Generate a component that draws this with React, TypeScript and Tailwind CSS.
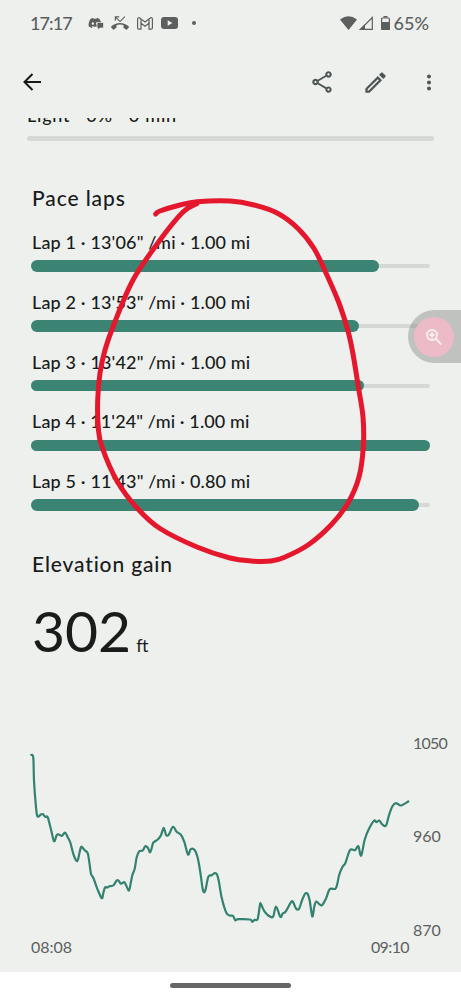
import React from 'react';
import { FaDiscord } from 'react-icons/fa';
import { MdMoreVert, MdOutlineEdit, MdOutlineShare, MdPhoneMissed } from 'react-icons/md';

type Point = [number, number];

const laps = [
  { name: 'Lap 1', pace: `13'06"`, distance: '1.00 mi', width: 348, spacing: 'tracking-[0.15px]' },
  { name: 'Lap 2', pace: `13'53"`, distance: '1.00 mi', width: 328, spacing: 'tracking-[0.15px]' },
  { name: 'Lap 3', pace: `13'42"`, distance: '1.00 mi', width: 332.5, spacing: 'tracking-[0.15px]' },
  { name: 'Lap 4', pace: `11'24"`, distance: '1.00 mi', width: 399, spacing: 'tracking-[0.12px]' },
  { name: 'Lap 5', pace: `11'43"`, distance: '0.80 mi', width: 388, spacing: 'tracking-[0.15px]' },
];

const elevation: Point[] = [
  [31.3, 754.3], [33.3, 757.3], [34, 780], [35.7, 803.3], [37, 814.7], [38.7, 816], [40.7, 814], [43, 813.7],
  [45.3, 816.3], [47.7, 816.7], [51, 829], [54, 840.7], [56.7, 834.7], [59, 834], [62, 835.3], [65, 832],
  [67.7, 836.7], [70.3, 842], [73.3, 853.3], [76.3, 860], [78, 859], [80.7, 847.3], [82.3, 847], [84.7, 849.7],
  [87.7, 852.7], [89.3, 861.7], [91, 873.3], [93.3, 877.3], [97.3, 888.3], [101.7, 897.7], [103.3, 892.7], [105, 887],
  [107.7, 887], [109.3, 885.7], [113.3, 885], [116.7, 880], [118.7, 880.3], [121, 883.3], [124.3, 881.7], [126.3, 885.3],
  [129, 890], [130.7, 882.7], [132.3, 874.7], [134.7, 868.3], [136.7, 856.7], [139.3, 850.7], [142.7, 850], [145.3, 845.7],
  [147.7, 847], [150.3, 851.7], [153, 842.7], [154.3, 841.3], [158, 838.7], [161, 834.7], [163.7, 827.3], [166, 834.3],
  [168.7, 834.3], [173, 826.3], [176.7, 831.3], [180.7, 834], [184.3, 841.3], [188, 854], [190.7, 848.7], [194.7, 849.7],
  [197.7, 857.3], [200.3, 871.7], [203, 890], [205.3, 890], [208.3, 876.3], [211.7, 874.7], [214.7, 872.7], [217, 874],
  [219, 881.7], [221.7, 897.3], [226.3, 912.3], [229.7, 915], [233, 915.3], [235.3, 919.7], [238.3, 918.7], [250, 919],
  [252.3, 921.3], [254.7, 919.3], [257.7, 918.3], [260, 904], [261, 903.7], [264.3, 910.7], [268.3, 915], [273, 916.3],
  [276, 906], [280.3, 916.3], [282.7, 913], [285.7, 911], [291.3, 901.3], [293.3, 902], [296, 908], [299, 908.3],
  [302.3, 899], [305.3, 893], [307.7, 893.7], [309.7, 900], [312.3, 916], [314.3, 906], [316.3, 901], [319.3, 903.7],
  [322, 904.7], [326, 898], [329.7, 888.7], [335.3, 888.3], [337.3, 883.3], [339.3, 874], [342.7, 866], [345.3, 862.7],
  [350, 849.7], [355, 849.7], [358.3, 845.7], [360.3, 854], [361.7, 853.7], [364.7, 839.3], [368.3, 829.7], [374, 820.3],
  [376.3, 821.7], [379.3, 820], [382, 823.7], [386, 825], [389, 814.7], [392.3, 806], [396, 802.7], [401, 805], [408.3, 801],
];

const marker: Point[] = [
  [155.7, 214], [160, 211], [180, 205], [197, 201.7], [230, 201], [254, 205], [278, 213.5], [298, 228.5], [314, 248.5],
  [326, 273], [339, 303], [348, 331], [353, 354], [358.3, 386.7], [363, 417], [363.3, 447], [359, 477], [348, 503],
  [331, 525], [308, 545], [284, 557.5], [271, 561], [251, 561], [230, 558], [197, 547], [160, 528.5], [137, 508],
  [117, 481], [102, 447], [98.3, 428], [97.7, 400], [100, 373], [105, 350], [113.3, 326], [133, 280], [160, 240],
  [183, 212], [197, 203.5],
];

// Catmull-Rom curve through every point
function smooth(points: Point[], tension = 6) {
  let d = `M${points[0][0]} ${points[0][1]}`;
  for (let i = 0; i < points.length - 1; i++) {
    const a = points[i - 1] ?? points[i];
    const b = points[i];
    const c = points[i + 1];
    const e = points[i + 2] ?? c;
    d += ` C${b[0] + (c[0] - a[0]) / tension} ${b[1] + (c[1] - a[1]) / tension} ${c[0] - (e[0] - b[0]) / tension} ${c[1] - (e[1] - b[1]) / tension} ${c[0]} ${c[1]}`;
  }
  return d;
}

function StatusBar() {
  return (
    <div className="flex h-[46px] items-center pl-[30px] pr-[32px] text-[#5c5f5e]">
      <span className="w-[58px] text-[18px] font-medium leading-none tracking-[-0.9px]">17:17</span>

      <div className="relative h-[14px] w-[16px]">
        <FaDiscord className="h-[14px] w-[14px]" />
        <svg className="absolute left-[8px] top-[6px]" width="8" height="8" viewBox="0 0 8 8">
          <path d="M1 .5h6.5v5.5H4L2 8V6H1z" fill="#5c5f5e" stroke="#eef0ee" strokeWidth=".7" />
        </svg>
      </div>
      <MdPhoneMissed className="ml-[7px] h-[18px] w-[18px]" />
      <svg className="ml-[8px]" width="16" height="13" viewBox="0 0 16 13" fill="none" stroke="currentColor" strokeWidth="1.2">
        <path d="M.6 2v9q0 1.200 1.100 1.200H4V6.300l4 3 4-3v5.900h2.300q1.100 0 1.100-1.200V2Q15.300.4 13.600.7L8 5 2.400.7Q.7.4.6 2Z" />
        <path d="M4 6.300V2M12 6.300V2" />
      </svg>
      <svg className="ml-[8px]" width="17" height="12" viewBox="0 0 17 12">
        <rect width="17" height="12" rx="3" fill="currentColor" />
        <path d="M6.700 3.300v5.400L11.400 6z" fill="#eef0ee" />
      </svg>
      <div className="ml-[14px] h-[4px] w-[4px] rounded-full bg-current"></div>

      <div className="ml-auto flex items-center">
        <svg width="17" height="14" viewBox="0 0 17 14">
          <path d="M0 3.500Q8.500-3 17 3.500L8.500 14z" fill="currentColor" />
        </svg>
        <svg className="ml-[2px]" width="14" height="14" viewBox="0 0 14 14">
          <path d="M13.300 1.500v11.800H1.500z" fill="none" stroke="currentColor" strokeWidth="1.200" />
          <path d="M0 14 6 8v6z" fill="currentColor" />
        </svg>
        <svg className="ml-[8px]" width="9" height="14" viewBox="0 0 9 14">
          <path d="M2.500 0h4v1.500h-4z" fill="currentColor" />
          <rect x=".6" y="2" width="7.800" height="11.400" rx="1" fill="none" stroke="currentColor" strokeWidth="1.200" />
          <path d="M0 6h9v7q0 1-1 1H1q-1 0-1-1z" fill="currentColor" />
        </svg>
        <span className="ml-[4px] text-[18px] font-medium leading-none">65%</span>
      </div>
    </div>
  );
}

function Toolbar() {
  return (
    <div className="flex h-[72px] items-center pl-[23px] pr-[20px] text-[#4d5755]">
      <svg width="18" height="18" viewBox="0 0 18 18" fill="none" stroke="#151918" strokeWidth="2">
        <path d="M18 9H1.500M9.500 1 1.500 9l8 8" />
      </svg>
      <MdOutlineShare className="ml-auto h-[26px] w-[26px]" />
      <MdOutlineEdit className="ml-[27px] h-[27px] w-[27px]" />
      <MdMoreVert className="ml-[28px] h-[27px] w-[24px]" />
    </div>
  );
}

export default function App() {
  return (
    <div className="relative flex h-[999px] w-[461px] flex-col overflow-hidden bg-white font-['Lato','Open_Sans',sans-serif] text-[#191c1b]">
      <div className="flex h-[972px] flex-col bg-[#eef0ee]">
        <StatusBar />
        <Toolbar />

        {/* Heart zone row, scrolled under the toolbar */}
        <div className="h-[24px] shrink-0 overflow-hidden pl-[27px] pr-[27px]">
          <div className="-mt-[15px] h-[33px] whitespace-nowrap text-[18px] font-medium leading-[24px] tracking-[0.75px]">Light · 0% · 0 min</div>
          <div className="h-[5px] rounded-full bg-[#d5d8d5]"></div>
        </div>

        {/* Pace laps */}
        <section className="mt-[42px] pl-[31px] pr-[31px]">
          <h2 className="h-[28px] pl-px text-[21px] font-medium leading-[28px] tracking-[0.9px]">Pace laps</h2>
          <div className="mt-[18px]">
            {laps.map((lap) => (
              <div key={lap.name} className="h-[59.800px]">
                <div className={`h-[24px] whitespace-nowrap pl-px text-[18px] font-medium leading-[24px] ${lap.spacing}`}>
                  {lap.name} · {lap.pace} /mi · {lap.distance}
                </div>
                <div className="mt-[6px] flex h-[12px] items-center">
                  <div className="z-10 h-[11.500px] shrink-0 rounded-full bg-[#3b8473]" style={{ width: lap.width }}></div>
                  <div className="-ml-[6px] h-[4px] flex-1 rounded-r-full bg-[#d5d8d5]"></div>
                </div>
              </div>
            ))}
          </div>
        </section>

        {/* Elevation */}
        <section className="mt-[21px]">
          <h2 className="h-[28px] pl-[32px] text-[21px] font-medium leading-[28px] tracking-[0.85px]">Elevation gain</h2>
          <div className="mt-[17px] flex h-[73px] items-baseline pl-[32px]">
            <span className="text-[57px] leading-[70px]">302</span>
            <span className="ml-[5px] text-[18px] tracking-[-0.4px]">ft</span>
          </div>
        </section>

        <div className="mt-[65px] flex h-[211px]">
          <div className="ml-[28px] w-[385px]">
            <svg className="mt-[15px] block" width="385" height="180" viewBox="28 747.500 385 180" fill="none">
              <path d={smooth(elevation)} stroke="#32826f" strokeWidth="2.200" strokeLinecap="round" strokeLinejoin="round" />
            </svg>
            <div className="mt-[9px] flex justify-between pl-[3px] pr-[4px] text-[16px] leading-[20px] text-[#5c6160]">
              <span>08:08</span>
              <span className="tracking-[-0.6px]">09:10</span>
            </div>
          </div>
          <div className="flex h-[207px] flex-col justify-between text-[16px] leading-[20px] text-[#5c6160]">
            <span className="tracking-[-0.8px]">1050</span>
            <span>960</span>
            <span>870</span>
          </div>
        </div>
      </div>

      {/* Gesture bar */}
      <div className="flex flex-1 justify-center">
        <div className="mt-[11px] h-[5px] w-[121px] rounded-full bg-[#666666]"></div>
      </div>

      {/* Floating zoom handle */}
      <div className="absolute right-0 top-[310px] z-20 flex h-[53px] w-[53px] items-center rounded-l-full bg-[#858986]/45 pl-[6px]">
        <div className="flex h-[40px] w-[40px] items-center justify-center rounded-full bg-[#edbbc8]">
          <svg width="16" height="16" viewBox="0 0 16 16" fill="none" stroke="#f5f3f2" strokeWidth="1.8">
            <circle cx="6" cy="6" r="5" />
            <path d="M9.600 9.600 15.300 15.300M6 3.300v5.400M3.300 6h5.400" />
          </svg>
        </div>
      </div>

      {/* Hand-drawn marker */}
      <svg className="pointer-events-none absolute left-0 top-0 z-20" width="461" height="999" viewBox="0 0 461 999" fill="none">
        <path d={smooth(marker)} stroke="#e4172d" strokeWidth="5" strokeLinecap="round" strokeLinejoin="round" />
      </svg>
    </div>
  );
}
